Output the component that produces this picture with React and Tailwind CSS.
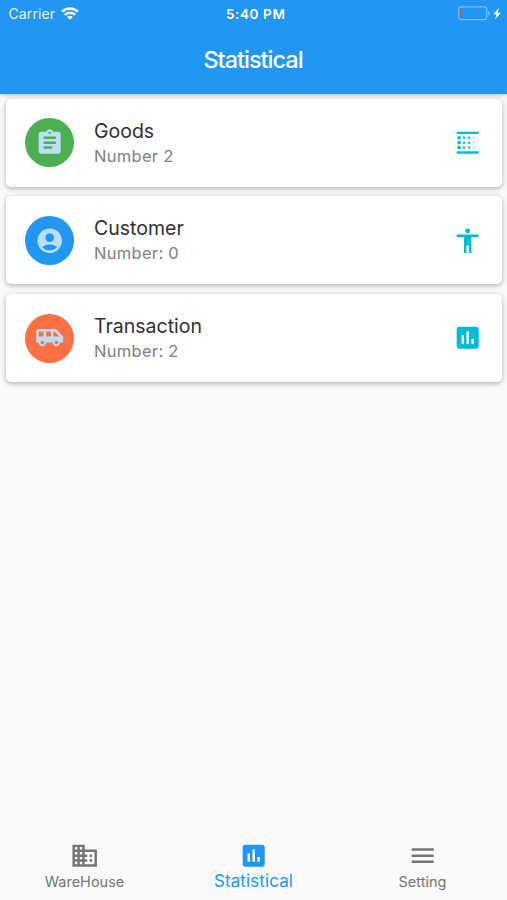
import React, { useState } from 'react';
import {
    MdAssignment,
    MdAccountCircle,
    MdAirportShuttle,
    MdBlurLinear,
    MdAccessibility,
    MdAssessment,
    MdBusiness,
    MdMenu,
} from 'react-icons/md';

const stats = [
    { title: 'Goods', subtitle: 'Number 2', Icon: MdAssignment, circle: 'bg-[#4caf50]', Trailing: MdBlurLinear },
    { title: 'Customer', subtitle: 'Number: 0', Icon: MdAccountCircle, circle: 'bg-[#2196f3]', Trailing: MdAccessibility },
    { title: 'Transaction', subtitle: 'Number: 2', Icon: MdAirportShuttle, circle: 'bg-[#ff7043]', Trailing: MdAssessment },
];

const tabs = [
    { label: 'WareHouse', Icon: MdBusiness },
    { label: 'Statistical', Icon: MdAssessment },
    { label: 'Setting', Icon: MdMenu },
];

const WifiIcon = () => (
    <svg width="18" height="13" viewBox="0 0 18 13" fill="none" stroke="#fff" strokeWidth="2.5">
        <path d="M1 4.7a11.6 11.6 0 0 1 16 0" />
        <path d="M3.9 7.9a7.4 7.4 0 0 1 10.2 0" />
        <path d="M9 12.8 6.2 10.2a4 4 0 0 1 5.6 0z" fill="#fff" stroke="none" />
    </svg>
);

const BatteryIcon = () => (
    <svg width="44" height="15" viewBox="0 0 44 15">
        <rect x="0.7" y="0.9" width="28" height="12.8" rx="2.6" fill="none" stroke="#79bff8" strokeWidth="1.2" />
        <rect x="1.9" y="3" width="2" height="8.6" rx="0.8" fill="#b85878" />
        <path d="M30.2 5.2q1.6 1 1.6 2.3t-1.6 2.3z" fill="#79bff8" />
        <path d="M41 1.8 35.4 8.2h3.2l-1.6 5.4L42.9 6.7h-3.4z" fill="#fff" />
    </svg>
);

const StatCard = ({ title, subtitle, Icon, circle, Trailing }) => (
    <div className="flex h-[88px] items-center rounded-[5px] bg-white pl-[19px] pr-[20px] shadow-[0_1px_6px_rgba(0,0,0,0.16),0_2px_4px_rgba(0,0,0,0.16)]">
        <div className={`flex size-[49px] shrink-0 items-center justify-center rounded-full ${circle}`}>
            <Icon className="size-[29.4px] text-[#bbdefb]" />
        </div>
        <div className="ml-5 flex-1">
            <div className="text-[19.5px] leading-[26px] text-[#303030]">{title}</div>
            <div className="text-[16.5px] leading-[24px] tracking-[0.3px] text-[#808080]">{subtitle}</div>
        </div>
        <Trailing className="size-[29.4px] text-[#00bcd4]" />
    </div>
);

const App = () => {
    const [active, setActive] = useState('Statistical');

    return (
        <div className="flex h-[900px] w-[507px] flex-col overflow-hidden bg-[#fafafa] font-['Inter',sans-serif]">
            {/* App bar */}
            <header className="z-10 h-[94px] shrink-0 bg-[#2196f3] text-white shadow-[0_1px_4px_rgba(0,0,0,0.25)]">
                <div className="grid h-[27px] grid-cols-3 items-center pl-[8.5px] pr-[5px]">
                    <div className="flex items-center gap-[6px] text-[14px] tracking-[0.1px] text-[#e3f2fd]">
                        Carrier <WifiIcon />
                    </div>
                    <div className="pl-px pt-px text-center text-[13.5px] font-semibold tracking-[0.6px]">5:40 PM</div>
                    <div className="flex justify-end"><BatteryIcon /></div>
                </div>
                <h1 className="pr-px pt-[17px] text-center text-[23.5px] font-medium leading-[32px] tracking-[-1px]">Statistical</h1>
            </header>

            <main className="flex flex-1 flex-col gap-[9.7px] pl-[6px] pr-[5px] pt-[4.7px]">
                {stats.map((item) => <StatCard key={item.title} {...item} />)}
            </main>

            {/* Bottom navigation */}
            <nav className="flex h-[71px] shrink-0 border-t border-[#f5f5f5]">
                {tabs.map(({ label, Icon }) => {
                    const isActive = label === active;
                    return (
                        <button
                            key={label}
                            onClick={() => setActive(label)}
                            className={`flex flex-1 flex-col items-center pt-[11px] ${isActive ? 'text-[#2196f3]' : 'text-[#757575]'}`}
                        >
                            <Icon className="size-[29.4px]" />
                            <span className={isActive ? 'text-[17px] leading-[22px] tracking-[0.1px]' : 'text-[14.5px] leading-[23px]'}>{label}</span>
                        </button>
                    );
                })}
            </nav>
        </div>
    );
};

export default App;
